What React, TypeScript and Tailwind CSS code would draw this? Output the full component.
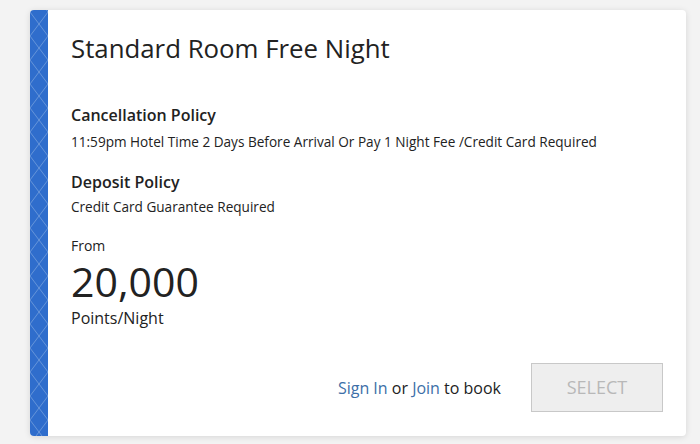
import React from "react";

function Stripe() {
  return (
    <div className="w-[18px] shrink-0 bg-[#2f6dcc] relative overflow-hidden rounded-l-[4px]">
      <svg className="absolute inset-0 w-full h-full" xmlns="http://www.w3.org/2000/svg">
        <defs>
          <pattern id="dia" width="18" height="24" patternUnits="userSpaceOnUse" x="0" y="2">
            <path d="M0 0 L18 24 M18 0 L0 24" stroke="#8aaee0" strokeWidth="0.8" fill="none" opacity="0.75" />
          </pattern>
        </defs>
        <rect width="100%" height="100%" fill="url(#dia)" />
      </svg>
    </div>
  );
}

export default function App() {
  return (
    <div className="w-[700px] h-[444px] bg-[#f3f3f3] pt-[10px] pl-[30px]" style={{ fontFamily: '"Open Sans", sans-serif' }}>
      <div className="flex w-[656px] h-[426px] bg-white rounded-[4px] shadow-[0_1px_6px_rgba(0,0,0,0.12)]">
        <Stripe />
        <div className="flex-1 flex flex-col pl-[23px] pr-[23px] pt-[22px] text-[#222]">
          <h1 className="text-[25.8px] leading-[32px] text-[#222]">Standard Room Free Night</h1>
          <h2 className="mt-[39px] text-[16px] leading-[24px] font-semibold text-[#222]">Cancellation Policy</h2>
          <p className="mt-[6px] text-[13.6px] leading-[18px] text-[#222]">11:59pm Hotel Time 2 Days Before Arrival Or Pay 1 Night Fee /Credit Card Required</p>
          <h2 className="mt-[19px] text-[16px] leading-[24px] font-semibold text-[#222]">Deposit Policy</h2>
          <p className="mt-[4px] text-[13.6px] leading-[18px] text-[#222]">Credit Card Guarantee Required</p>
          <p className="mt-[23px] text-[14px] leading-[14px] text-[#222]">From</p>
          <p className="text-[41px] leading-[56px] text-[#222]">20,000</p>
          <p className="text-[16px] leading-[18px] text-[#222]">Points/Night</p>
          <div className="mt-auto mb-[24px] flex items-center justify-end">
            <span className="text-[16px] text-[#222]">
              <span className="text-[#3d6fa8]">Sign In</span> or <span className="text-[#3d6fa8]">Join</span> to book
            </span>
            <div className="ml-[30px] w-[132px] h-[49px] bg-[#eeeeee] border border-[#c8c8c8] flex items-center justify-center text-[18px] text-[#b8b8b8]">
              SELECT
            </div>
          </div>
        </div>
      </div>
    </div>
  );
}
